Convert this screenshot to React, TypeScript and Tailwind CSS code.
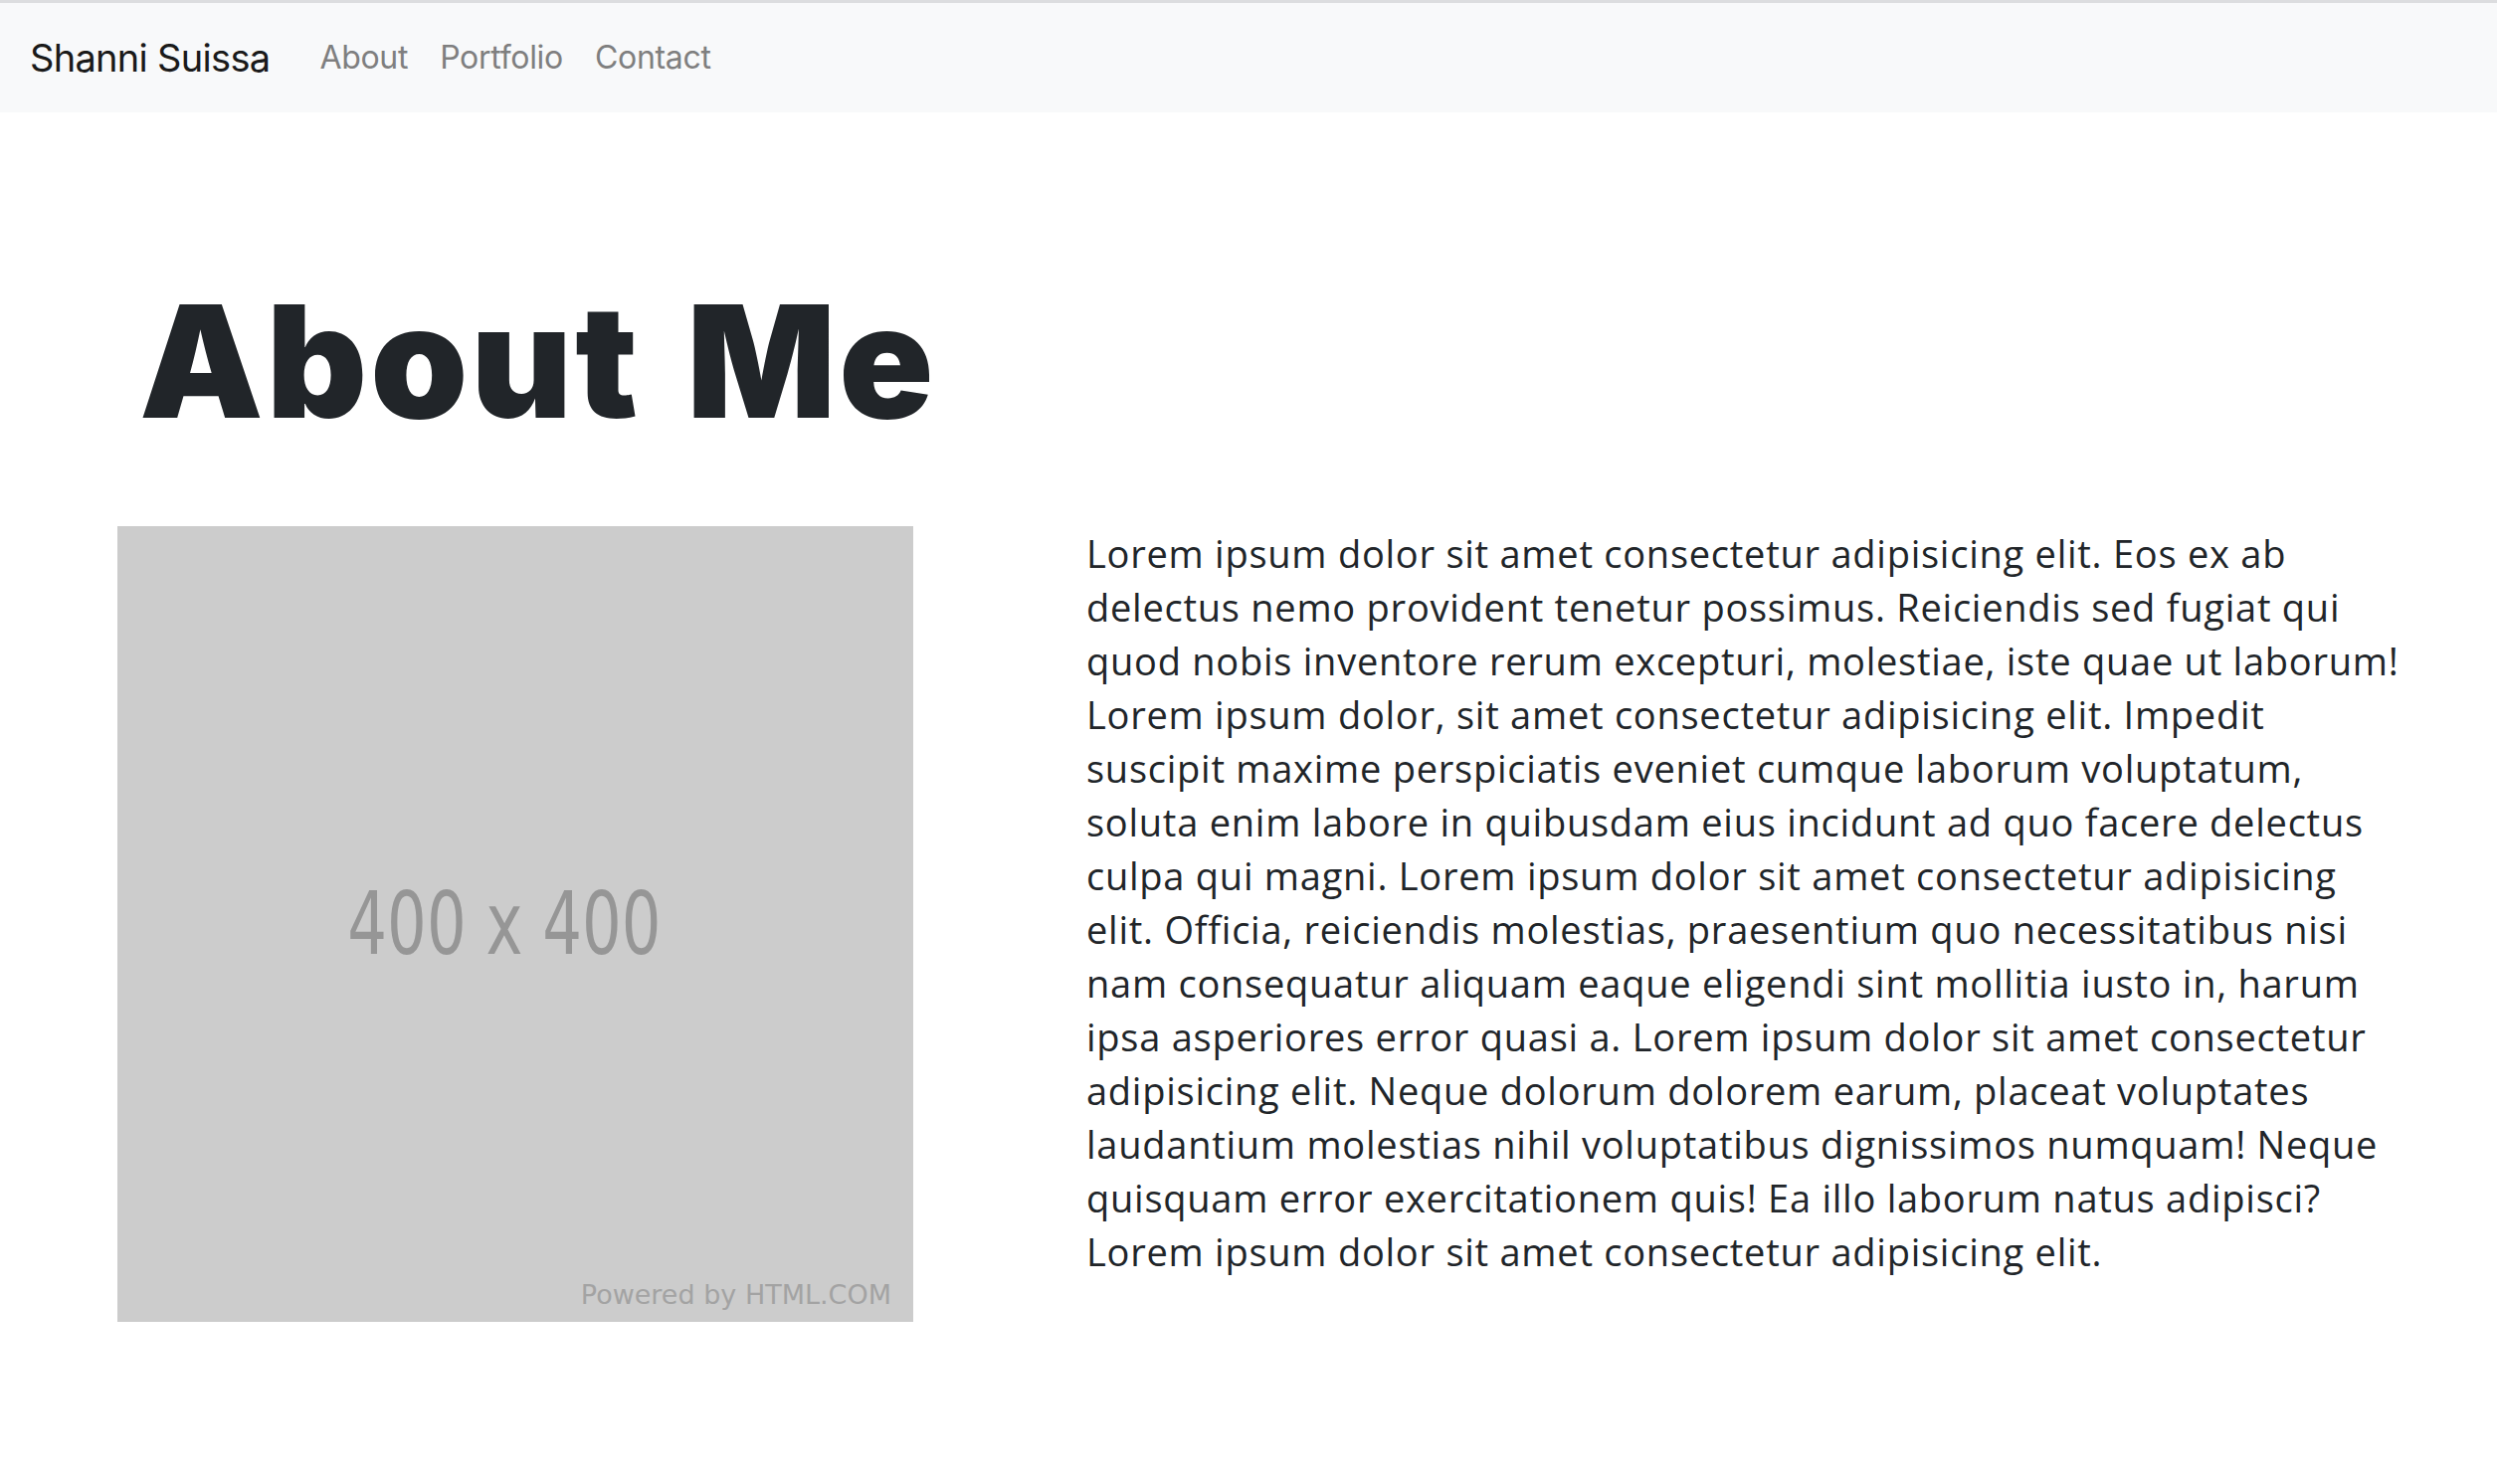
import React from "react";

const lines = [
  "Lorem ipsum dolor sit amet consectetur adipisicing elit. Eos ex ab",
  "delectus nemo provident tenetur possimus. Reiciendis sed fugiat qui",
  "quod nobis inventore rerum excepturi, molestiae, iste quae ut laborum!",
  "Lorem ipsum dolor, sit amet consectetur adipisicing elit. Impedit",
  "suscipit maxime perspiciatis eveniet cumque laborum voluptatum,",
  "soluta enim labore in quibusdam eius incidunt ad quo facere delectus",
  "culpa qui magni. Lorem ipsum dolor sit amet consectetur adipisicing",
  "elit. Officia, reiciendis molestias, praesentium quo necessitatibus nisi",
  "nam consequatur aliquam eaque eligendi sint mollitia iusto in, harum",
  "ipsa asperiores error quasi a. Lorem ipsum dolor sit amet consectetur",
  "adipisicing elit. Neque dolorum dolorem earum, placeat voluptates",
  "laudantium molestias nihil voluptatibus dignissimos numquam! Neque",
  "quisquam error exercitationem quis! Ea illo laborum natus adipisci?",
  "Lorem ipsum dolor sit amet consectetur adipisicing elit.",
];

export default function App() {
  return (
    <div className="min-h-screen w-full bg-white">
      <nav className="h-[113px] bg-[#f8f9fa] border-t-[3px] border-[#dcdddf] flex items-center pl-[30px]">
        <span className="text-[38px] leading-none text-[#1a1a1a] font-['Inter',sans-serif] tracking-[-0.7px]">
          Shanni Suissa
        </span>
        <div className="flex items-center ml-[50px] gap-[32px] text-[32px] leading-none text-[#7f7f7f] font-['Inter',sans-serif] tracking-[-0.3px]">
          <a>About</a>
          <a>Portfolio</a>
          <a>Contact</a>
        </div>
      </nav>
      <main>
        <h1 className="mt-[172px] ml-[140px] text-[157px] leading-none font-black text-[#212529] font-['Inter',sans-serif] tracking-[3px] [word-spacing:12px]">
          About Me
        </h1>
        <div className="flex mt-[87px] pl-[118px]">
          <div className="relative w-[800px] h-[800px] bg-[#cccccc] shrink-0 flex items-center justify-center">
            <span className="-translate-x-[11px] scale-x-[0.71] text-[88px] leading-none text-[#969696] font-['DejaVu_Sans',sans-serif]">
              400 x 400
            </span>
            <span className="absolute right-[22px] bottom-[14px] text-[27px] leading-none text-[#a3a3a3] font-['DejaVu_Sans',sans-serif]">
              Powered by HTML.COM
            </span>
          </div>
          <p className="ml-[174px] text-[38px] leading-[54px] font-medium text-[#212529] font-['Open_Sans',sans-serif] tracking-[0.75px]">
            {lines.map((l, i) => (
              <span key={i} className="block whitespace-nowrap">
                {l}
              </span>
            ))}
          </p>
        </div>
      </main>
    </div>
  );
}
